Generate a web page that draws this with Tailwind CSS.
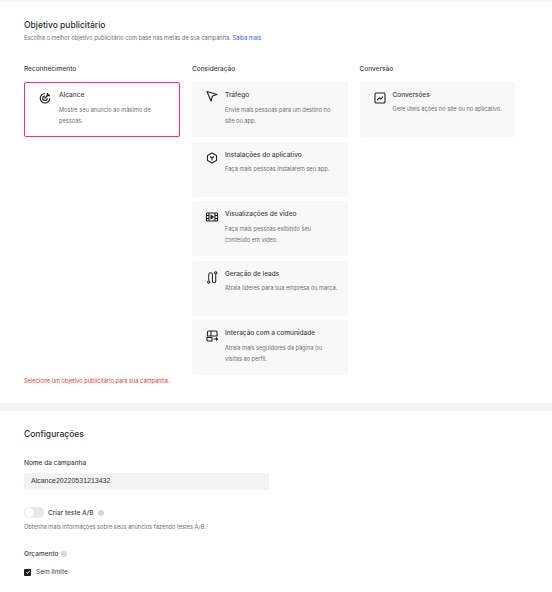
<!DOCTYPE html>
<html lang="pt">
<head>
    <meta charset="UTF-8">
    <meta name="viewport" content="width=device-width, initial-scale=1.0">
    <title>Objetivo publicitário</title>
    <script src="https://cdn.jsdelivr.net/npm/@tailwindcss/browser@4"></script>
</head>
<body class="bg-white font-['Inter',sans-serif] text-[#2b2b33] overflow-hidden">
    <div class="w-[552px] h-[592px] overflow-hidden">
        <div class="h-[2px] bg-[#f5f5f5]"></div>

        <!-- Objetivo -->
        <section class="px-6 h-[401px]">
            <h1 class="pt-[18px] text-[8.500px] leading-[11px] font-medium">Objetivo publicitário</h1>
            <p class="mt-[3px] text-[5.650px] leading-[8px] text-[#6f6f76]">Escolha o melhor objetivo publicitário com base nas metas de sua campanha. <span class="text-[#3b5bf0]">Saiba mais</span></p>

            <div class="mt-[23px] flex gap-3">
                <!-- Reconhecimento -->
                <div class="w-[156px]">
                    <h2 class="text-[6.500px] leading-[8px] font-medium text-[#44444c]">Reconhecimento</h2>
                    <div class="mt-[9px] h-[55px] flex gap-[8px] pl-[14px] pr-[14px] pt-[8px] rounded-[2px] border border-[#fe2c75] bg-white">
                        <svg class="w-[12px] h-[12px] mt-[1px] shrink-0" viewBox="0 0 24 24" fill="none" stroke="#222" stroke-width="2.400"><path d="M12 3a9.500 9.500 0 1 0 9.500 9.500"/><path d="M12 8a4.500 4.500 0 1 0 4.500 4.500"/><path d="M11 13l8-8" /><path d="M17 2v5h5" stroke-width="3"/></svg>
                        <div>
                            <h3 class="text-[6.500px] leading-[9px] font-medium text-[#44444c]">Alcance</h3>
                            <p class="mt-[5px] text-[5.650px] leading-[10.500px] text-[#6f6f76]">Mostre seu anúncio ao máximo de pessoas.</p>
                        </div>
                    </div>
                </div>

                <!-- Consideração -->
                <div class="w-[155.500px]">
                    <h2 class="text-[6.500px] leading-[8px] font-medium text-[#44444c]">Consideração</h2>
                    <div class="mt-[9px] flex flex-col gap-[4.500px]">
                        <div class="h-[55px] flex gap-[7px] pl-[14px] pr-[10px] pt-[9px] rounded-[2px] bg-[#f8f8f8]">
                            <svg class="w-[12px] h-[12px] mt-[-1px] shrink-0" viewBox="0 0 24 24" fill="none" stroke="#222" stroke-width="2.200" stroke-linejoin="round"><path d="M2 3l20 6-9 3-3 10z"/></svg>
                            <div>
                                <h3 class="text-[6.500px] leading-[9px] font-medium text-[#44444c]">Tráfego</h3>
                                <p class="mt-[5px] w-[112px] text-[5.650px] leading-[10.500px] text-[#6f6f76]">Envie mais pessoas para um destino no site ou app.</p>
                            </div>
                        </div>
                        <div class="h-[55px] flex gap-[7px] pl-[14px] pr-[8px] pt-[9px] rounded-[2px] bg-[#f8f8f8]">
                            <svg class="w-[12px] h-[12px] mt-[1px] shrink-0" viewBox="0 0 24 24" fill="none" stroke="#222" stroke-width="2.200" stroke-linejoin="round"><path d="M12 2l9 5v10l-9 5-9-5V7z"/><path d="M8 9l4 3 4-3M12 12v5"/></svg>
                            <div>
                                <h3 class="text-[6.500px] leading-[9px] font-medium text-[#44444c]">Instalações do aplicativo</h3>
                                <p class="mt-[4px] text-[5.650px] leading-[10.500px] text-[#6f6f76]">Faça mais pessoas instalarem seu app.</p>
                            </div>
                        </div>
                        <div class="h-[55px] flex gap-[7px] pl-[14px] pr-[18px] pt-[9px] rounded-[2px] bg-[#f8f8f8]">
                            <svg class="w-[12px] h-[12px] mt-[1px] shrink-0" viewBox="0 0 24 24" fill="none" stroke="#222" stroke-width="2.200"><rect x="1" y="4" width="22" height="16" rx="1"/><path d="M6 4v16M18 4v16M1 9h5M1 15h5M18 9h5M18 15h5"/><path d="M10 9l5 3-5 3z" fill="#222"/></svg>
                            <div>
                                <h3 class="text-[6.500px] leading-[9px] font-medium text-[#44444c]">Visualizações de vídeo</h3>
                                <p class="mt-[5px] text-[5.650px] leading-[10.500px] text-[#6f6f76]">Faça mais pessoas exibindo seu conteúdo em vídeo.</p>
                            </div>
                        </div>
                        <div class="h-[55px] flex gap-[7px] pl-[14px] pr-[8px] pt-[9px] rounded-[2px] bg-[#f8f8f8]">
                            <svg class="w-[12px] h-[13px] mt-[1px] shrink-0" viewBox="0 0 24 28" fill="none" stroke="#222" stroke-width="2.200"><circle cx="5" cy="24" r="2.500"/><circle cx="20" cy="4" r="2.500"/><path d="M5 21V8a4 4 0 0 1 8 0v14a3.500 3.500 0 0 0 7 0V7"/></svg>
                            <div>
                                <h3 class="text-[6.500px] leading-[9px] font-medium text-[#44444c]">Geração de leads</h3>
                                <p class="mt-[4px] text-[5.650px] leading-[10.500px] text-[#6f6f76]">Atraia líderes para sua empresa ou marca.</p>
                            </div>
                        </div>
                        <div class="h-[55px] flex gap-[7px] pl-[14px] pr-[18px] pt-[9px] rounded-[2px] bg-[#f8f8f8]">
                            <svg class="w-[12px] h-[12px] mt-[1px] shrink-0" viewBox="0 0 24 24" fill="none" stroke="#222" stroke-width="2.200" stroke-linejoin="round"><path d="M5 2h15a2 2 0 0 1 2 2v8H3V4a2 2 0 0 1 2-2zM10 2v10"/><path d="M2 15h10v7H4a2 2 0 0 1-2-2z"/><path d="M15 18h8M20 15l3 3-3 3"/></svg>
                            <div>
                                <h3 class="text-[6.500px] leading-[9px] font-medium text-[#44444c]">Interação com a comunidade</h3>
                                <p class="mt-[5px] text-[5.650px] leading-[10.500px] text-[#6f6f76]">Atraia mais seguidores da página ou visitas ao perfil.</p>
                            </div>
                        </div>
                    </div>
                </div>

                <!-- Conversão -->
                <div class="w-[155.500px]">
                    <h2 class="text-[6.500px] leading-[8px] font-medium text-[#44444c]">Conversão</h2>
                    <div class="mt-[9px] h-[55px] flex gap-[7px] pl-[14px] pr-[8px] pt-[9px] rounded-[2px] bg-[#f8f8f8]">
                        <svg class="w-[12px] h-[12px] mt-[1px] shrink-0" viewBox="0 0 24 24" fill="none" stroke="#222" stroke-width="2.200"><rect x="2" y="2" width="20" height="20" rx="2"/><path d="M6 16l5-4 3 2 4-5"/></svg>
                        <div>
                            <h3 class="text-[6.500px] leading-[9px] font-medium text-[#44444c]">Conversões</h3>
                            <p class="mt-[4px] text-[5.650px] leading-[10.500px] text-[#6f6f76]">Gere úteis ações no site ou no aplicativo.</p>
                        </div>
                    </div>
                </div>
            </div>
            <p class="mt-[2px] text-[5.650px] leading-[8px] text-[#e0413a]">Selecione um objetivo publicitário para sua campanha.</p>
        </section>

        <div class="h-[8px] bg-[#f5f5f5]"></div>

        <!-- Configurações -->
        <section class="px-6">
            <h2 class="pt-[18px] text-[8.500px] leading-[11px] font-medium">Configurações</h2>
            <label class="block mt-[19px] text-[6.500px] leading-[8px] font-medium text-[#44444c]">Nome da campanha</label>
            <div class="mt-[6px] w-[245px] h-[17px] pl-[7px] flex items-center rounded-[2px] bg-[#f3f3f3] font-['Liberation_Sans',sans-serif] text-[7px] text-[#333]">Alcance20220531213432</div>

            <div class="mt-[17px] flex items-center gap-[4px]">
                <div class="w-[20px] h-[11px] rounded-full bg-[#e8e8e8] p-[1px]">
                    <div class="w-[9px] h-[9px] rounded-full bg-white"></div>
                </div>
                <span class="text-[6.500px] leading-[8px] font-medium text-[#44444c]">Criar teste A/B</span>
                <span class="w-[6px] h-[6px] rounded-full bg-[#d8d8d8]"></span>
            </div>
            <p class="mt-[5px] text-[5.650px] leading-[8px] text-[#6f6f76]">Obtenha mais informações sobre seus anúncios fazendo testes A/B.</p>

            <div class="mt-[19px] flex items-center gap-[3px]">
                <span class="text-[6.500px] leading-[8px] font-medium text-[#44444c]">Orçamento</span>
                <span class="w-[6px] h-[6px] rounded-full bg-[#d8d8d8]"></span>
            </div>
            <div class="mt-[10px] flex items-center gap-[5px]">
                <div class="w-[7px] h-[7px] rounded-[1px] bg-[#1c1c22] flex items-center justify-center">
                    <svg class="w-[6px] h-[6px]" viewBox="0 0 24 24" fill="none" stroke="#fff" stroke-width="4"><path d="M5 13l5 5 9-11"/></svg>
                </div>
                <span class="text-[6.500px] leading-[8px] text-[#44444c]">Sem limite</span>
            </div>
        </section>
    </div>
</body>
</html>
